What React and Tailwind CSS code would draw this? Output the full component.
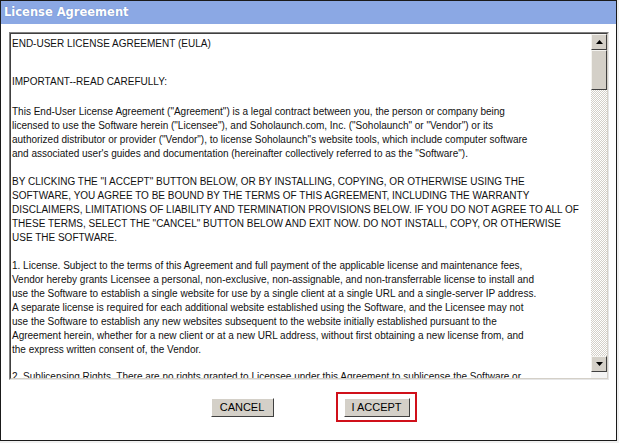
import React from "react";

const lines = [
  { t: "END-USER LICENSE AGREEMENT (EULA)", mt: "mt-0" },
  { t: "IMPORTANT--READ CAREFULLY:", mt: "mt-[24px]" },
  { t: 'This End-User License Agreement ("Agreement") is a legal contract between you, the person or company being', mt: "mt-[16px]" },
  { t: 'licensed to use the Software herein ("Licensee"), and Soholaunch.com, Inc. ("Soholaunch" or "Vendor") or its' },
  { t: 'authorized distributor or provider ("Vendor"), to license Soholaunch"s website tools, which include computer software' },
  { t: 'and associated user\'s guides and documentation (hereinafter collectively referred to as the "Software").' },
  { t: 'BY CLICKING THE "I ACCEPT" BUTTON BELOW, OR BY INSTALLING, COPYING, OR OTHERWISE USING THE', mt: "mt-[14px]" },
  { t: "SOFTWARE, YOU AGREE TO BE BOUND BY THE TERMS OF THIS AGREEMENT, INCLUDING THE WARRANTY" },
  { t: "DISCLAIMERS, LIMITATIONS OF LIABILITY AND TERMINATION PROVISIONS BELOW. IF YOU DO NOT AGREE TO ALL OF" },
  { t: 'THESE TERMS, SELECT THE "CANCEL" BUTTON BELOW AND EXIT NOW. DO NOT INSTALL, COPY, OR OTHERWISE' },
  { t: "USE THE SOFTWARE." },
  { t: "1. License. Subject to the terms of this Agreement and full payment of the applicable license and maintenance fees,", mt: "mt-[14px]" },
  { t: "Vendor hereby grants Licensee a personal, non-exclusive, non-assignable, and non-transferrable license to install and" },
  { t: "use the Software to establish a single website for use by a single client at a single URL and a single-server IP address." },
  { t: "A separate license is required for each additional website established using the Software, and the Licensee may not" },
  { t: "use the Software to establish any new websites subsequent to the website initially established pursuant to the" },
  { t: "Agreement herein, whether for a new client or at a new URL address, without first obtaining a new license from, and" },
  { t: "the express written consent of, the Vendor." },
  { t: "2. Sublicensing Rights. There are no rights granted to Licensee under this Agreement to sublicense the Software or", mt: "mt-[13px]" },
];

function Arrow({ up }) {
  return (
    <svg width="7" height="4" viewBox="0 0 7 4">
      {up ? <polygon points="3.5,0 7,4 0,4" fill="#000" /> : <polygon points="0,0 7,0 3.5,4" fill="#000" />}
    </svg>
  );
}

function SBtn({ children }) {
  return (
    <div className="w-[16px] h-[16px] bg-[#d4d0c8] border border-t-[#f4f3ef] border-l-[#f4f3ef] border-r-[#404040] border-b-[#404040] flex items-center justify-center">
      {children}
    </div>
  );
}

export default function App() {
  return (
    <div className="w-[619px] h-[443px] bg-[#f0f0f0] overflow-hidden" style={{ fontFamily: '"Liberation Sans", Arial, sans-serif' }}>
      <div className="w-[617px] h-[441px] bg-white border border-[#1a1a1a] flex flex-col">
        <div className="h-[23px] bg-[#8ba8e4] flex items-center pl-[3px]">
          <span className="text-white font-bold text-[11.5px]" style={{ fontFamily: '"DejaVu Sans", Verdana, sans-serif', textShadow: "0 0 1px rgba(60,80,140,0.5)" }}>
            License Agreement
          </span>
        </div>
        <div className="mt-[8px] ml-[8px] w-[600px] h-[348px] border border-t-[#808080] border-l-[#808080] border-r-[#e6e6e6] border-b-[#e6e6e6]">
          <div className="w-full h-full border border-t-[#404040] border-l-[#404040] border-r-[#d4d0c8] border-b-[#d4d0c8] flex">
            <div className="flex-1 overflow-hidden pl-[1px] pt-[3px] text-[10px] leading-[14px] text-[#111]">
              {lines.map((l, i) => (
                <div key={i} className={`whitespace-nowrap ${l.mt || ""}`}>{l.t}</div>
              ))}
            </div>
            <div className="w-[16px] flex flex-col bg-[#ebeae6]">
              <SBtn><Arrow up /></SBtn>
              <div className="w-[16px] h-[40px] bg-[#d4d0c8] border border-t-[#f4f3ef] border-l-[#f4f3ef] border-r-[#404040] border-b-[#404040]" />
              <div className="flex-1 bg-[repeating-conic-gradient(#ffffff_0%_25%,#d4d0c8_0%_50%)] bg-[length:2px_2px]" />
              <SBtn><Arrow /></SBtn>
              <div className="h-[6px] bg-[#f4f4f4] flex items-end justify-end pr-[1px] pb-[1px]">
                <div className="w-[7px] h-[5px] bg-[radial-gradient(#b0b0b0_40%,transparent_45%)] bg-[length:2px_2px]" />
              </div>
            </div>
          </div>
        </div>
        <div className="flex justify-center items-center gap-[62px] pl-[10px] mt-[12px]">
          <button className="w-[63px] h-[19px] bg-[#d4d0c8] border border-t-[#ffffff] border-l-[#ffffff] border-r-[#404040] border-b-[#404040] text-[11px] text-black flex items-center justify-center leading-none">
            CANCEL
          </button>
          <div className="w-[81px] h-[30px] border-2 border-[#d0101a] flex items-center pl-[6px]">
            <button className="w-[66px] h-[19px] bg-[#d4d0c8] border border-t-[#ffffff] border-l-[#ffffff] border-r-[#404040] border-b-[#404040] text-[11px] text-black flex items-center justify-center leading-none">
              I ACCEPT
            </button>
          </div>
        </div>
      </div>
    </div>
  );
}
